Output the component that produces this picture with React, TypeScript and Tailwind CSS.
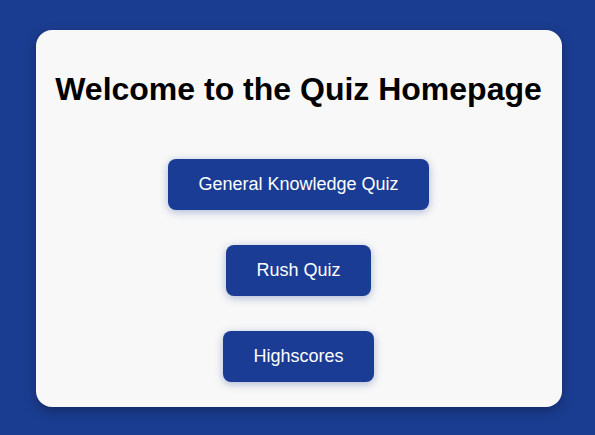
export default function App() {
  const buttons = ["General Knowledge Quiz", "Rush Quiz", "Highscores"]

  return (
    <div className="h-screen w-full bg-[#1b3d91] flex items-center justify-center pl-[2px] pt-[2px] font-['Liberation_Sans',Arial,sans-serif]">
      <div className="w-[526px] h-[377px] bg-[#f8f8f8] rounded-2xl shadow-[0_4px_12px_rgba(0,0,0,0.3)] flex flex-col items-center px-2 pt-[41px]">
        <h1 className="text-[32px] leading-[37px] font-bold text-black text-center whitespace-nowrap">Welcome to the Quiz Homepage</h1>
        <div className="mt-[51px] flex flex-col items-center gap-[35px]">
          {buttons.map((label) => (
            <button
              key={label}
              className="bg-[#1a3c94] text-white text-lg leading-[21px] px-[30px] py-[15px] rounded-lg shadow-[0_2px_8px_rgba(30,60,140,0.35)]"
            >
              {label}
            </button>
          ))}
        </div>
      </div>
    </div>
  )
}
